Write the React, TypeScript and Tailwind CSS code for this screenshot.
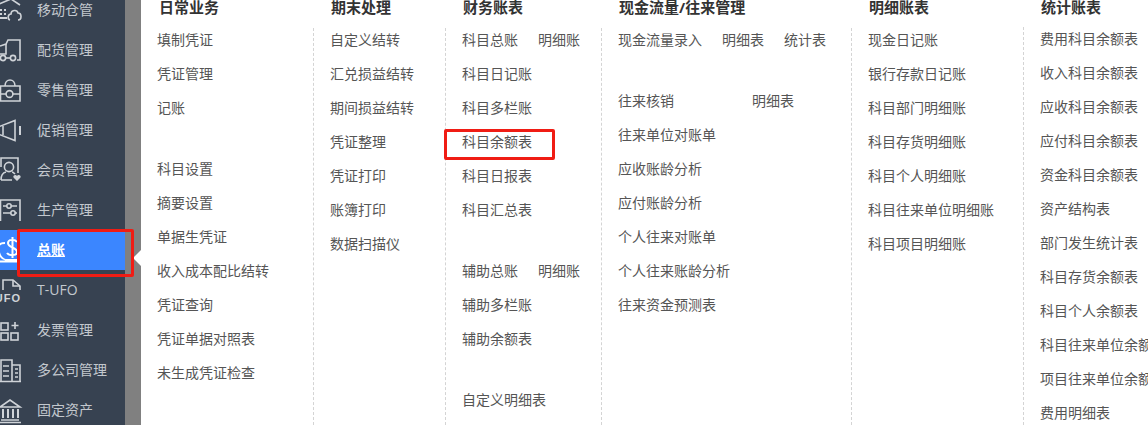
import React from 'react';

const iconProps = {
  width: 24,
  height: 28,
  viewBox: '0 -14 24 28',
  fill: 'none',
  stroke: '#cfd3d8',
  strokeWidth: 1.6,
};

const icons: Record<string, React.ReactNode> = {
  store: (
    <>
      <path d="M-1 -6 L11 -11 L20 -5" />
      <path d="M0 0h2M4 0h2M0 4h2M4 4h2M0 8h7" strokeWidth={2} />
      <path d="M10 10 C7 9 8 4 11 4 C11 0 17 -1 18 3 C22 3 22 10 18 10" />
    </>
  ),
  truck: (
    <>
      <path d="M0 -4 L6 -6 L8 -10 H20 V10 H17" />
      <path d="M6 -6 V4 H0" />
      <path d="M6 8 H10" />
      <circle cx="3" cy="8" r="2.6" />
      <circle cx="13" cy="8" r="2.6" />
    </>
  ),
  bag: (
    <>
      <path d="M0.5 -4 H20 V11 H0.5 Z" />
      <path d="M5 -4 C5 -12 15 -12 15 -4" />
      <circle cx="9.5" cy="4" r="3.4" />
      <path d="M0 4 H6M13 4 H20" />
    </>
  ),
  horn: (
    <>
      <path d="M-2 -3 L15 -9.5 V10.5 L-2 4 Z" />
      <path d="M3 -4 V5" />
      <path d="M20 -4 V5" strokeWidth={2} />
    </>
  ),
  member: (
    <>
      <path d="M1 -3 V-12 H18 V3" />
      <circle cx="9" cy="-3" r="4.6" />
      <path d="M1 10 C1 4 4 2.5 6 2 M12 2 C13 2 14 3 15 4 M1 10 H12" />
      <path d="M17 11 L13.5 7.5 C12.5 5 16 4 17 6 C18 4 21.5 5 20.5 7.5 Z" fill="#cfd3d8" stroke="none" />
    </>
  ),
  sliders: (
    <>
      <path d="M0.5 11 V-10 H20 V11" />
      <path d="M3 -4 H17 M3 3 H17" />
      <circle cx="9" cy="-4" r="2.2" fill="#374251" />
      <circle cx="13" cy="3" r="2.2" fill="#374251" />
    </>
  ),
  ledger: (
    <>
      <path d="M-2 -2 C-2 -6 2 -7 5 -7" stroke="#ffffff" strokeWidth={2} />
      <path d="M17 -8 C15 -11 8 -11 8 -7 C8 -2 17 -3 17 2 C17 6 9 6 7 3 M12.5 -13 V8" stroke="#ffffff" strokeWidth={2} />
      <path d="M-1 2 C0 7 2 9 6 10 H18 M-1 11.5 H20" stroke="#ffffff" strokeWidth={1.8} />
    </>
  ),
  ufo: (
    <>
      <path d="M3 0 V-10 H13 L20 -4 V0" />
      <path d="M13 -10 V-4 H20" />
      <text
        x="21"
        y="12"
        textAnchor="end"
        stroke="none"
        fill="#cfd3d8"
        fontSize="11"
        fontWeight="700"
        letterSpacing="1"
        fontFamily="Liberation Sans, sans-serif"
      >
        UFO
      </text>
    </>
  ),
  grid: (
    <>
      <rect x="1" y="-7" width="7" height="7" />
      <rect x="1" y="3" width="7" height="7" />
      <rect x="11" y="3" width="7" height="7" />
      <path d="M15 -8 V-1 M11.5 -4.5 H18.5" />
    </>
  ),
  building: (
    <>
      <path d="M1 11 V-10 H12 V11 M12 -5 H20 V11 M-1 11.5 H21" />
      <path d="M3 -4 H9 M3 1 H9 M3 6 H9 M15 -1 H18 M15 3 H18 M15 7 H18" />
    </>
  ),
  bank: (
    <>
      <path d="M0 -3 L10 -10 L20 -3 Z" />
      <path d="M3 -1 V8 M8 -1 V8 M13 -1 V8 M18 -1 V8" strokeWidth={2} />
      <path d="M1 10 H19 M-1 12.5 H21" />
    </>
  ),
};

const menu = [
  { icon: 'store', label: '移动仓管' },
  { icon: 'truck', label: '配货管理' },
  { icon: 'bag', label: '零售管理' },
  { icon: 'horn', label: '促销管理' },
  { icon: 'member', label: '会员管理' },
  { icon: 'sliders', label: '生产管理' },
  { icon: 'ledger', label: '总账', active: true },
  { icon: 'ufo', label: 'T-UFO' },
  { icon: 'grid', label: '发票管理' },
  { icon: 'building', label: '多公司管理' },
  { icon: 'bank', label: '固定资产' },
];

const L = (...names: string[]) => names.map((n) => [n]);

const columns = [
  {
    title: '日常业务',
    width: 'w-[172px]',
    first: true,
    groups: [
      L('填制凭证', '凭证管理', '记账'),
      L('科目设置', '摘要设置', '单据生凭证', '收入成本配比结转', '凭证查询', '凭证单据对照表', '未生成凭证检查'),
    ],
  },
  {
    title: '期末处理',
    width: 'w-[132px]',
    groups: [L('自定义结转', '汇兑损益结转', '期间损益结转', '凭证整理', '凭证打印', '账簿打印', '数据扫描仪')],
  },
  {
    title: '财务账表',
    width: 'w-[156px]',
    groups: [
      [['科目总账', '明细账'], ['科目日记账'], ['科目多栏账'], ['科目余额表'], ['科目日报表'], ['科目汇总表']],
      [['辅助总账', '明细账'], ['辅助多栏账'], ['辅助余额表']],
      [['自定义明细表']],
    ],
  },
  {
    title: '现金流量/往来管理',
    width: 'w-[250px]',
    groups: [
      [['现金流量录入', '明细表', '统计表']],
      [['往来核销', '', '明细表'], ['往来单位对账单'], ['应收账龄分析'], ['应付账龄分析'], ['个人往来对账单'], ['个人往来账龄分析'], ['往来资金预测表']],
    ],
  },
  {
    title: '明细账表',
    width: 'w-[172px]',
    groups: [L('现金日记账', '银行存款日记账', '科目部门明细账', '科目存货明细账', '科目个人明细账', '科目往来单位明细账', '科目项目明细账')],
  },
  {
    title: '统计账表',
    width: 'w-[125px]',
    groups: [
      L(
        '费用科目余额表',
        '收入科目余额表',
        '应收科目余额表',
        '应付科目余额表',
        '资金科目余额表',
        '资产结构表',
        '部门发生统计表',
        '科目存货余额表',
        '科目个人余额表',
        '科目往来单位余额表',
        '项目往来单位余额表',
        '费用明细表',
      ),
    ],
  },
];

function Row({ items }: { items: string[] }) {
  return (
    <div className="flex h-6 items-center gap-5 whitespace-nowrap text-sm leading-6 text-[#555]">
      {items.map((text, i) =>
        text ? <span key={i}>{text}</span> : <span key={i} className="w-[38px]" />,
      )}
    </div>
  );
}

export default function App() {
  return (
    <div className="relative flex h-[425px] w-[1148px] overflow-hidden bg-white font-['Open_Sans','Noto_Sans_CJK_SC',sans-serif]">
      <aside className="-mt-[10px] w-[125px] shrink-0 bg-[#374251]">
        {menu.map((m) => (
          <div
            key={m.label}
            className={`flex h-10 items-center whitespace-nowrap text-sm ${
              m.active ? 'bg-[#3b86ff] font-bold text-white underline' : 'text-[#c3c8ce]'
            }`}
          >
            <svg {...iconProps} className="shrink-0 overflow-visible">
              {icons[m.icon]}
            </svg>
            <span className="ml-[13px]">{m.label}</span>
          </div>
        ))}
      </aside>
      <div className="w-4 shrink-0 bg-[#808080]" />

      {columns.map((col) => (
        <section key={col.title} className={`flex shrink-0 flex-col ${col.width}`}>
          <h3 className="h-7 -translate-y-[3px] pl-[18px] text-[15px] leading-5 font-bold whitespace-nowrap text-[#333]">
            {col.title}
          </h3>
          <div
            className={`flex flex-1 flex-col gap-[37px] pl-4 ${
              col.first ? '' : 'border-l border-dashed border-[#d4d4d4]'
            }`}
          >
            {col.groups.map((group, g) => (
              <div key={g} className="flex flex-col gap-[10px]">
                {group.map((items, r) => (
                  <Row key={r} items={items} />
                ))}
              </div>
            ))}
          </div>
        </section>
      ))}

      {/* 截图上的标注 */}
      <div className="absolute top-[250px] left-[133px] h-0 w-0 border-y-8 border-r-8 border-y-transparent border-r-white" />
      <div className="absolute top-[229px] left-[17px] h-[48px] w-[117px] rounded-[2px] border-[3px] border-[#f01c14]" />
      <div className="absolute top-[129px] left-[444px] h-[31px] w-[111px] rounded-[2px] border-[3px] border-[#f01c14]" />
    </div>
  );
}
